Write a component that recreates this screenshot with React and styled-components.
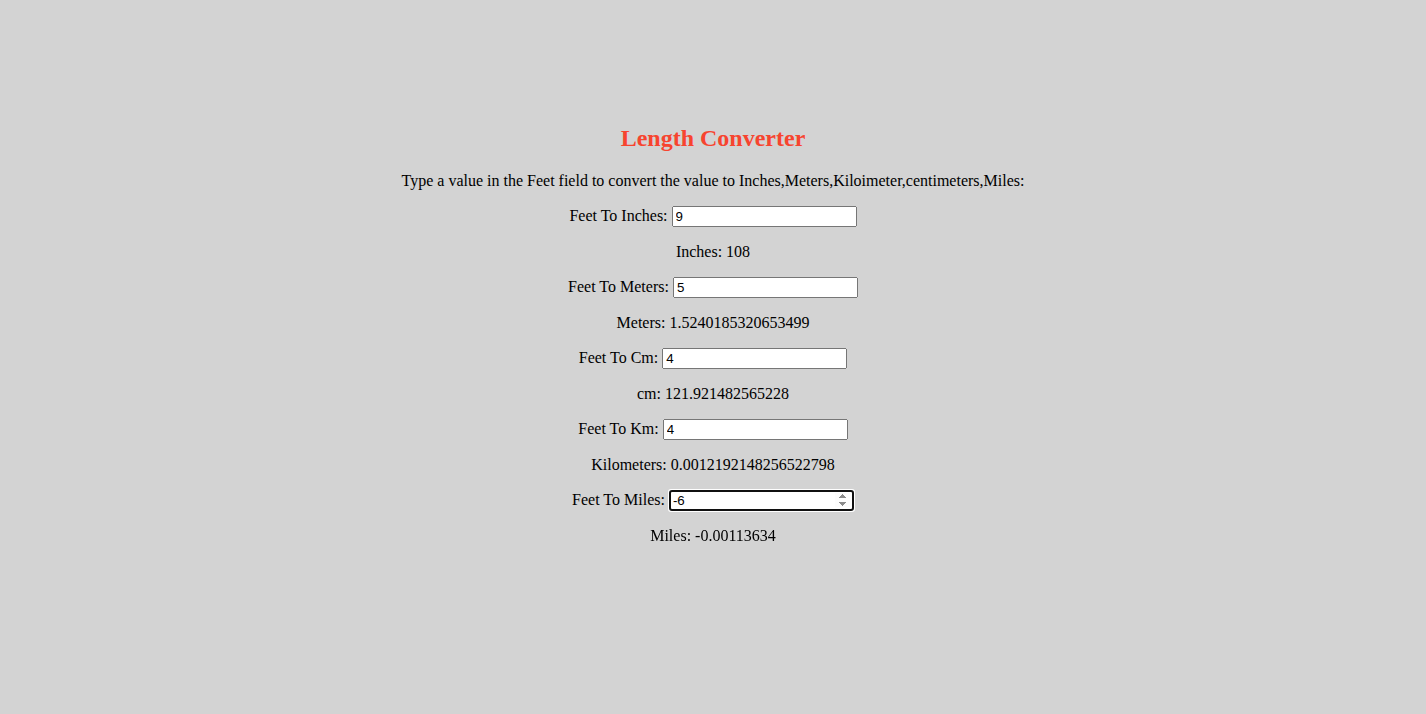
import React, { useState } from 'react'
import styled, { createGlobalStyle } from 'styled-components'

const GlobalStyle = createGlobalStyle`
  html, body {
    margin: 0;
    background-color: #d3d3d3;
  }
  body {
    font-family: 'Liberation Serif', 'Times New Roman', serif;
    font-size: 16px;
    color: #000000;
  }
`

const Page = styled.main`
  padding-top: 105px;
  text-align: center;
`

const Title = styled.h2`
  margin: 20px 0;
  font-size: 24px;
  font-weight: bold;
  color: #f7442f;
`

const Line = styled.p`
  margin: 16px 0;
`

const NumberInput = styled.input`
  font-family: 'Liberation Sans', Arial, sans-serif;
  font-size: 13.333px;
  margin: 0;
`

const rows = [
  { key: 'inches', label: 'Feet To Inches:', result: 'Inches', init: '9', out: '108', calc: (v) => v * 12 },
  { key: 'meters', label: 'Feet To Meters:', result: 'Meters', init: '5', out: '1.5240185320653499', calc: (v) => v / 3.2808 },
  { key: 'cm', label: 'Feet To Cm:', result: 'cm', init: '4', out: '121.921482565228', calc: (v) => v / 0.032808 },
  { key: 'km', label: 'Feet To Km:', result: 'Kilometers', init: '4', out: '0.0012192148256522798', calc: (v) => v / 3280.8 },
  { key: 'miles', label: 'Feet To Miles:', result: 'Miles', init: '-6', out: '-0.00113634', calc: (v) => v * 0.00018939 },
]

function ConverterRow({ row }) {
  const [value, setValue] = useState(row.init)
  const [out, setOut] = useState(row.out)

  const handleChange = (e) => {
    setValue(e.target.value)
    setOut(e.target.value === '' ? '' : String(row.calc(parseFloat(e.target.value))))
  }

  return (
    <>
      <Line>
        {row.label}{' '}
        <NumberInput
          type="number"
          value={value}
          onChange={handleChange}
          autoFocus={row.key === 'miles'}
        />
      </Line>
      <Line>
        {row.result}: {out}
      </Line>
    </>
  )
}

export default function App() {
  return (
    <>
      <GlobalStyle />
      <Page>
        <Title>Length Converter</Title>
        <Line>
          Type a value in the Feet field to convert the value to
          Inches,Meters,Kiloimeter,centimeters,Miles:
        </Line>
        {rows.map((row) => (
          <ConverterRow key={row.key} row={row} />
        ))}
      </Page>
    </>
  )
}
